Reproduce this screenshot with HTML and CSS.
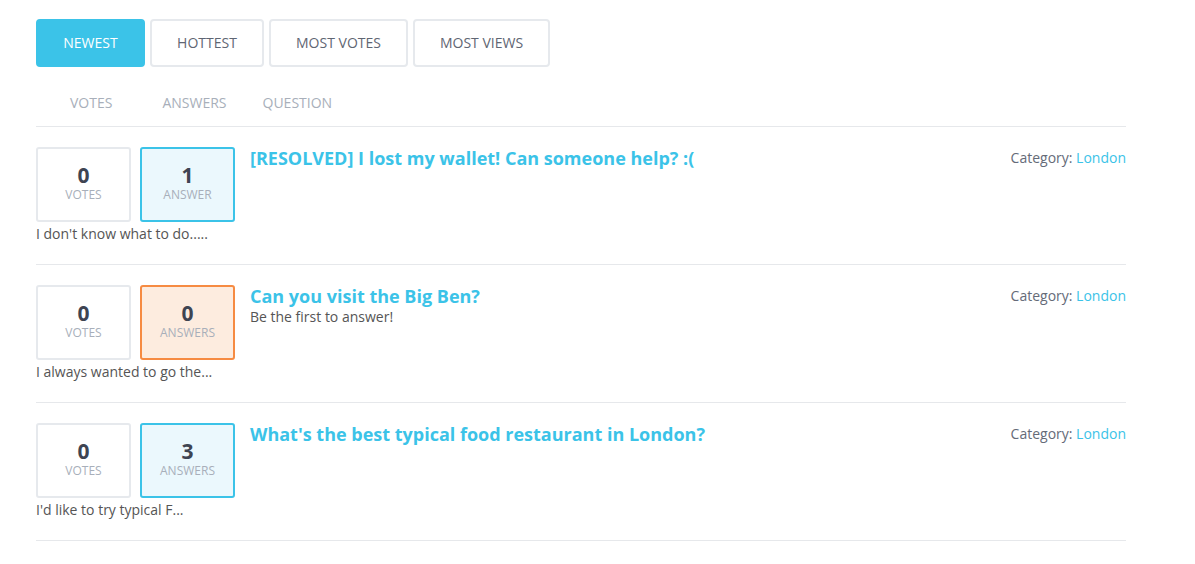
FILE: index.html
```html
<!DOCTYPE html>
<html>
<head>
<meta charset="utf-8">
<link rel="stylesheet" href="styles.css">
</head>
<body>
<div class="page">
  <div class="tabs">
    <button class="tab active">NEWEST</button>
    <button class="tab">HOTTEST</button>
    <button class="tab">MOST VOTES</button>
    <button class="tab">MOST VIEWS</button>
  </div>
  <div class="heads">
    <span class="h-votes">VOTES</span>
    <span class="h-answers">ANSWERS</span>
    <span class="h-question">QUESTION</span>
  </div>
  <div class="row">
    <div class="left">
      <div class="stats">
        <div class="stat"><div class="num">0</div><div class="lbl">VOTES</div></div>
        <div class="stat answered"><div class="num">1</div><div class="lbl">ANSWER</div></div>
      </div>
      <div class="excerpt">I don't know what to do.....</div>
    </div>
    <div class="body">
      <a class="title">[RESOLVED] I lost my wallet! Can someone help? :(</a>
    </div>
    <div class="cat">Category: <a>London</a></div>
  </div>
  <div class="row">
    <div class="left">
      <div class="stats">
        <div class="stat"><div class="num">0</div><div class="lbl">VOTES</div></div>
        <div class="stat unanswered"><div class="num">0</div><div class="lbl">ANSWERS</div></div>
      </div>
      <div class="excerpt">I always wanted to go the...</div>
    </div>
    <div class="body">
      <a class="title">Can you visit the Big Ben?</a>
      <div class="sub">Be the first to answer!</div>
    </div>
    <div class="cat">Category: <a>London</a></div>
  </div>
  <div class="row">
    <div class="left">
      <div class="stats">
        <div class="stat"><div class="num">0</div><div class="lbl">VOTES</div></div>
        <div class="stat answered"><div class="num">3</div><div class="lbl">ANSWERS</div></div>
      </div>
      <div class="excerpt">I'd like to try typical F...</div>
    </div>
    <div class="body">
      <a class="title">What's the best typical food restaurant in London?</a>
    </div>
    <div class="cat">Category: <a>London</a></div>
  </div>
</div>
</body>
</html>
```
FILE: styles.css
```css
* { box-sizing: border-box; }
body {
  margin: 0;
  background: #fff;
  font-family: "Open Sans", "Liberation Sans", sans-serif;
  color: #555;
}
.page {
  width: 1090px;
  margin-left: 36px;
  padding-top: 19px;
}
.tabs {
  display: flex;
  gap: 5px;
}
.tab {
  height: 48px;
  border: 2px solid #e6e9ed;
  background: #fff;
  border-radius: 4px;
  font-family: inherit;
  font-size: 14px;
  color: #5f6673;
  padding: 0 0 1px;
  cursor: pointer;
}
.tab:nth-child(1) { width: 109px; }
.tab:nth-child(2) { width: 114px; }
.tab:nth-child(3) { width: 139px; }
.tab:nth-child(4) { width: 137px; }
.tab.active {
  background: #3bc3e8;
  border-color: #3bc3e8;
  color: #fff;
}
.heads {
  display: flex;
  font-size: 14px;
  color: #a8afba;
  height: 60px;
  align-items: center;
  padding-top: 12px;
  border-bottom: 1px solid #e6e8eb;
}
.h-votes { margin-left: 34px; }
.h-answers { margin-left: 50px; }
.h-question { margin-left: 36px; }
.row {
  display: flex;
  height: 138px;
  padding-top: 20px;
  border-bottom: 1px solid #e6e8eb;
}
.left { width: 214px; flex: none; }
.stats { display: flex; gap: 9px; }
.stat {
  width: 95px;
  height: 75px;
  border: 2px solid #e6e9ed;
  border-radius: 3px;
  text-align: center;
  padding-top: 12px;
}
.stat.answered { border-color: #3bc3e8; background: #ebf8fd; }
.stat.unanswered { border-color: #f68b42; background: #fdecdf; }
.num {
  font-size: 21px;
  font-weight: 700;
  color: #3e4452;
  line-height: 28px;
}
.lbl {
  font-size: 12px;
  color: #a8afba;
  line-height: 12px;
}
.excerpt {
  font-size: 14px;
  line-height: 20px;
  margin-top: 2px;
  color: #555;
}
.body { flex: 1; }
.title {
  display: block;
  font-size: 18px;
  font-weight: 700;
  color: #3bc3e8;
  line-height: 22px;
}
.sub {
  font-size: 14px;
  line-height: 20px;
  color: #555;
}
.cat {
  font-size: 14px;
  color: #656b78;
  line-height: 20px;
  margin-top: 1px;
}
.cat a { color: #3bc3e8; }
```
